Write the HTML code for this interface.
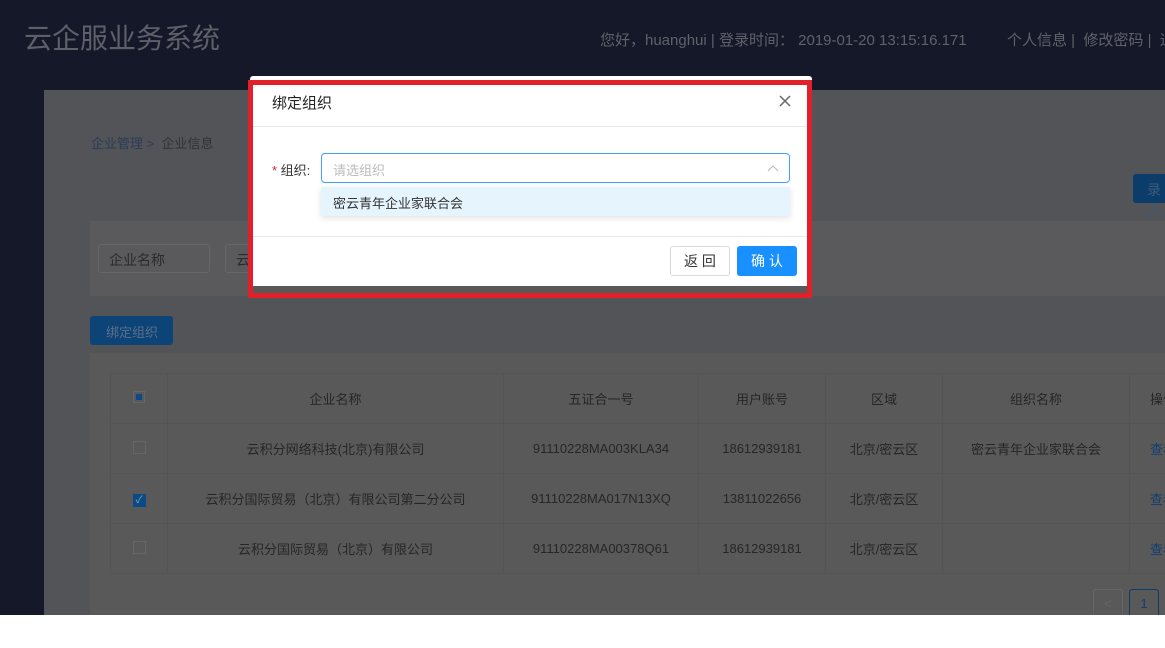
<!DOCTYPE html>
<html><head><meta charset="utf-8"><style>
*{margin:0;padding:0;box-sizing:border-box}
body{width:1165px;height:648px;overflow:hidden;background:#fff;font-family:"Liberation Sans","Noto Sans CJK SC",sans-serif;position:relative}
.a{position:absolute}
td{border:1px solid #545454;text-align:center;font-size:13px;color:#262626;height:50px}
</style></head><body>
<div class="a" style="left:0;top:0;width:1165px;height:615px;background:#141828"></div>
<div class="a" style="left:24px;top:17px;font-size:28px;color:#5d6068">云企服业务系统</div>
<div class="a" style="left:600px;top:29px;font-size:15px;color:#5f626a;white-space:nowrap">您好，huanghui | 登录时间： 2019-01-20 13:15:16.171</div>
<div class="a" style="left:1007px;top:29px;font-size:15px;color:#5f626a;white-space:nowrap">个人信息 |&nbsp; 修改密码 |&nbsp; 退</div>
<div class="a" style="left:44px;top:90px;width:1121px;height:525px;background:#535458"></div>
<div class="a" style="left:91px;top:133px;font-size:13px;color:#2a3d55">企业管理 &gt;&nbsp; <span style="color:#333">企业信息</span></div>
<div class="a" style="left:1133px;top:174px;width:40px;height:29px;background:#0c3c6a;border-radius:3px;color:#3d5a7a;font-size:14px;padding:6px 0 0 14px">录入</div>
<div class="a" style="left:90px;top:221px;width:1075px;height:75px;background:#5a5a5c"></div>
<div class="a" style="left:98px;top:244px;width:112px;height:29px;border:1px solid #666;border-radius:3px;font-size:14px;color:#2b2b2b;padding:5px 0 0 10px">企业名称</div>
<div class="a" style="left:225px;top:244px;width:40px;height:29px;border:1px solid #666;border-radius:3px;font-size:14px;color:#2b2b2b;padding:5px 0 0 10px">云</div>
<div class="a" style="left:90px;top:316px;width:83px;height:29px;background:#0d4477;border-radius:3px;color:#5b6f88;font-size:13px;padding:6px 0 0 16px">绑定组织</div>
<div class="a" style="left:90px;top:353px;width:1075px;height:262px;background:#59595a"></div>
<table class="a" style="left:110px;top:373px;border-collapse:collapse;width:1070px">
<tr><td style="width:57px"><span style="display:inline-block;width:12px;height:12px;border:1px solid #666;background:#59595a;position:relative"><span style="position:absolute;left:2px;top:2px;width:6px;height:6px;background:#0b4a86"></span></span></td><td style="width:336px">企业名称</td><td style="width:195px">五证合一号</td><td style="width:127px">用户账号</td><td style="width:117px">区域</td><td style="width:187px">组织名称</td><td style="text-align:left;padding-left:20px">操作</td></tr>
<tr><td><span style="display:inline-block;width:13px;height:13px;border:1px solid #666"></span></td><td>云积分网络科技(北京)有限公司</td><td>91110228MA003KLA34</td><td>18612939181</td><td>北京/密云区</td><td>密云青年企业家联合会</td><td style="text-align:left;padding-left:20px;color:#0f3f70">查看</td></tr>
<tr><td><span style="display:inline-block;width:13px;height:13px;background:#0b4a86;color:#8aa;font-size:10px;line-height:13px">✓</span></td><td>云积分国际贸易（北京）有限公司第二分公司</td><td>91110228MA017N13XQ</td><td>13811022656</td><td>北京/密云区</td><td></td><td style="text-align:left;padding-left:20px;color:#0f3f70">查看</td></tr>
<tr><td><span style="display:inline-block;width:13px;height:13px;border:1px solid #666"></span></td><td>云积分国际贸易（北京）有限公司</td><td>91110228MA00378Q61</td><td>18612939181</td><td>北京/密云区</td><td></td><td style="text-align:left;padding-left:20px;color:#0f3f70">查看</td></tr>
</table>
<div class="a" style="left:1093px;top:589px;width:30px;height:30px;border:1px solid #666;border-radius:3px;color:#666;font-size:13px;text-align:center;line-height:28px">&lt;</div>
<div class="a" style="left:1129px;top:589px;width:30px;height:30px;border:1px solid #0c3c6a;border-radius:3px;color:#0f3f70;font-size:13px;text-align:center;line-height:28px">1</div>
<div class="a" style="left:0;top:615px;width:1165px;height:33px;background:#fff"></div>
<!-- modal -->
<div class="a" style="left:250px;top:76px;width:562px;height:10px;background:#fff;border-radius:3px"></div>
<div class="a" style="left:253px;top:286px;width:554px;height:8px;background:#59595a"></div>
<div class="a" style="left:253px;top:84px;width:554px;height:202px;background:#fff"></div>
<div class="a" style="left:248px;top:80px;width:564px;height:218px;border:5px solid #e2202a"></div>
<div class="a" style="left:272px;top:92px;font-size:15px;color:#222">绑定组织</div>
<svg class="a" style="left:779px;top:95px" width="12" height="12"><path d="M1 1L11 11M11 1L1 11" stroke="#666" stroke-width="1.5"/></svg>
<div class="a" style="left:253px;top:126px;width:554px;height:1px;background:#e8e8e8"></div>
<div class="a" style="left:272px;top:160px;font-size:13px;color:#333"><span style="color:#e0202a">*</span> 组织:</div>
<div class="a" style="left:321px;top:153px;width:469px;height:30px;border:1px solid #40a0ff;border-radius:4px;font-size:13px;color:#bbb;padding:6px 0 0 11px">请选组织</div>
<svg class="a" style="left:767px;top:164px" width="12" height="8"><path d="M1 7L6 2L11 7" fill="none" stroke="#bbb" stroke-width="1"/></svg>
<div class="a" style="left:321px;top:187px;width:469px;height:29px;background:#e6f4fd;box-shadow:0 2px 6px rgba(0,0,0,.12);font-size:13px;color:#333;padding:6px 0 0 12px">密云青年企业家联合会</div>
<div class="a" style="left:253px;top:236px;width:554px;height:1px;background:#e8e8e8"></div>
<div class="a" style="left:670px;top:246px;width:60px;height:30px;border:1px solid #d9d9d9;border-radius:3px;font-size:14px;color:#333;text-align:center;line-height:28px">返 回</div>
<div class="a" style="left:737px;top:246px;width:60px;height:30px;background:#1890ff;border-radius:3px;font-size:14px;color:#fff;text-align:center;line-height:30px">确 认</div>
</body></html>
